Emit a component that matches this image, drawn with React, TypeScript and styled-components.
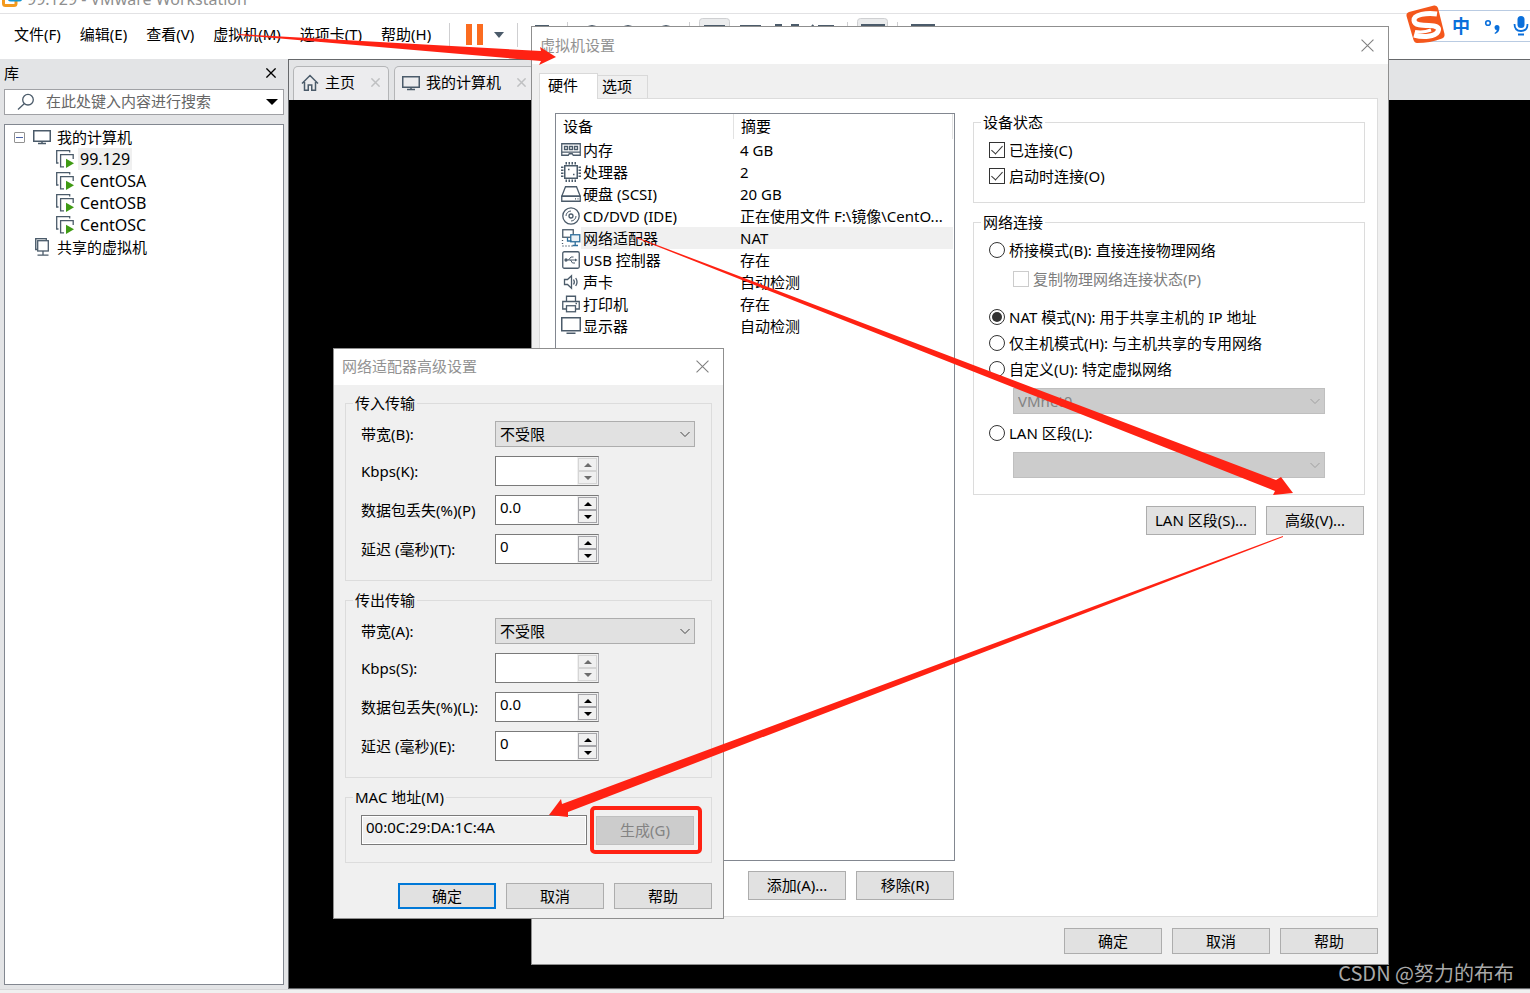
import React from "react";
import styled, { createGlobalStyle, css } from "styled-components";

const slate = "#4b5b6a";
const red = "#ff2213";

const GlobalStyle = createGlobalStyle`
  *, *::before, *::after { box-sizing: border-box; }
  body { margin: 0; background: #f0f0f0; }
  body, button, input, select {
    font-family: "Noto Sans", "Noto Sans CJK SC", sans-serif;
    font-size: 15px;
    line-height: 19px;
    color: #000;
  }
  button { padding: 0; cursor: default; }
  svg { display: block; flex: none; }
`;

/* ---------- main window ---------- */

const Desktop = styled.div`
  position: relative;
  display: flex;
  flex-direction: column;
  min-height: 100vh;
  overflow: hidden;
  background: #f0f0f0;
`;

const TitleBar = styled.header`
  display: flex;
  align-items: flex-end;
  gap: 4px;
  height: 14px;
  padding: 0 0 6px 2px;
  overflow: hidden;
  background: #fff;
  border-bottom: 1px solid #e2e2e4;
`;

const WindowTitle = styled.span`
  font-size: 16px;
  line-height: 16px;
  color: #8f8f8f;
  white-space: nowrap;
`;

const MenuBar = styled.nav`
  display: flex;
  align-items: center;
  height: 45px;
  padding: 0 0 4px 5px;
  background: #fff;
`;

const MenuGroup = styled.div`
  display: flex;
  padding: 0 8px 1px 0;
`;

const MenuButton = styled.button`
  padding: 0 10px 0 9px;
  border: 0;
  background: none;
  white-space: nowrap;
`;

const ToolDivider = styled.span`
  width: 1px;
  height: 24px;
  background: #cfcfd1;
`;

const ToolButton = styled.button`
  display: flex;
  align-items: center;
  border: 0;
  background: none;
`;

const PauseButton = styled(ToolButton)`
  gap: 11px;
  margin: 0 13px 0 16px;
`;

const ToolStrip = styled.div`
  align-self: flex-start;
  padding-top: 3px;
`;

const Workspace = styled.div`
  display: flex;
  flex: 1;
  background: #e3e4e6;
`;

const Sidebar = styled.aside`
  display: flex;
  flex-direction: column;
  flex: none;
  width: 288px;
  padding: 0 4px 4px;
`;

const SidebarHeader = styled.div`
  display: flex;
  align-items: center;
  justify-content: space-between;
  height: 30px;
  padding: 0 8px 2px 0;
`;

const SearchBox = styled.div`
  display: flex;
  align-items: center;
  height: 26px;
  padding: 0 5px 1px 12px;
  background: #fff;
  border: 1px solid #a0a1a5;
`;

const SearchInput = styled.input`
  flex: 1;
  min-width: 0;
  padding: 0 0 0 11px;
  border: 0;
  outline: 0;
  background: none;
  &::placeholder { color: #666; opacity: 1; }
`;

const TreePanel = styled.div`
  flex: 1;
  margin-top: 9px;
  padding-top: 1px;
  background: #fff;
  border: 1px solid #828790;
`;

const TreeList = styled.ul`
  margin: 0;
  padding: 0;
  list-style: none;
`;

const TreeRow = styled.div<{ $indent: number }>`
  display: flex;
  align-items: center;
  gap: 4px;
  height: 22px;
  padding-left: ${(p) => p.$indent}px;
`;

const TreeLabel = styled.span<{ $selected?: boolean; $latin?: boolean }>`
  padding: 0 2px;
  font-size: ${(p) => (p.$latin ? 16 : 15)}px;
  line-height: 22px;
  background: ${(p) => (p.$selected ? "#f0f0f0" : "none")};
`;

const Expander = styled.button`
  display: flex;
  width: 11px;
  height: 11px;
  margin-right: 4px;
  background: #fff;
  border: 1px solid #919191;
  border-radius: 1px;
  align-items: center;
  justify-content: center;
  &::after { content: ""; width: 7px; height: 1px; background: #4b63a7; }
`;

const Stage = styled.main`
  display: flex;
  flex-direction: column;
  flex: 1;
  min-width: 0;
  background: #000;
  border: 1px solid #66686b;
  border-right: 0;
`;

const TabStrip = styled.div`
  display: flex;
  gap: 5px;
  height: 40px;
  padding: 6px 4px 0;
  background: #e3e4e6;
`;

const PageTab = styled.div`
  display: flex;
  align-items: center;
  padding: 0 8px 2px 7px;
  background: #ececee;
  border: 1px solid #b4b5b7;
  border-bottom: 0;
  border-radius: 5px 5px 0 0;
  white-space: nowrap;
`;

const TabName = styled.span`
  padding: 0 16px 0 6px;
`;

const StatusBar = styled.footer`
  height: 4px;
  background: #f0f0f0;
  border-top: 1px solid #d6d6d8;
`;

/* ---------- dialogs ---------- */

const Dialog = styled.section<{ $left: number; $top: number; $width: number }>`
  position: absolute;
  left: ${(p) => p.$left}px;
  top: ${(p) => p.$top}px;
  width: ${(p) => p.$width}px;
  background: #f0f0f0;
  border: 1px solid #8f8f8f;
`;

const DialogTitle = styled.header<{ $compact?: boolean }>`
  display: flex;
  align-items: center;
  justify-content: space-between;
  height: ${(p) => (p.$compact ? 36 : 37)}px;
  padding: 0 14px 1px 8px;
  background: #fff;
  color: #929292;
`;

const IconButton = styled.button`
  display: flex;
  border: 0;
  background: none;
`;

const SettingsBody = styled.div`
  padding: 9px 10px 10px 7px;
`;

const TabRow = styled.div`
  display: flex;
  align-items: flex-end;
`;

const DialogTab = styled.button<{ $active?: boolean }>`
  position: relative;
  height: 23px;
  padding: 0 15px 1px 4px;
  text-align: left;
  background: #f0f0f0;
  border: 1px solid #d9d9d9;
  border-width: 1px 1px 0 0;
  ${(p) =>
    p.$active &&
    css`
      z-index: 1;
      height: 26px;
      margin-bottom: -1px;
      padding: 0 19px 3px 8px;
      background: #fff;
      border-left-width: 1px;
    `}
`;

const Panel = styled.div`
  display: flex;
  align-items: flex-start;
  gap: 18px;
  padding: 14px 12px 16px 15px;
  background: #fff;
  border: 1px solid #dcdcdc;
`;

const DeviceColumn = styled.div`
  flex: 0 0 400px;
`;

const DeviceBox = styled.div`
  min-height: 748px;
  border: 1px solid #828790;
`;

const DeviceTable = styled.table`
  width: 100%;
  table-layout: fixed;
  border-collapse: collapse;
  border-spacing: 0;
  td, th { padding: 0; height: 22px; font-weight: 400; text-align: left; white-space: nowrap; }
`;

const HeadCell = styled.th<{ $first?: boolean }>`
  width: ${(p) => (p.$first ? "178px" : "auto")};
  div {
    height: 25px;
    margin-right: ${(p) => (p.$first ? 0 : 1)}px;
    padding: 3px 7px;
    border-right: 1px solid #e2e2e2;
  }
`;

const NameCell = styled.div`
  display: flex;
  align-items: center;
  height: 22px;
  padding-left: 5px;
`;

const CellText = styled.span<{ $selected: boolean; $summary?: boolean }>`
  display: block;
  flex: 1;
  height: 22px;
  margin-right: ${(p) => (p.$summary ? 1 : 0)}px;
  padding-left: ${(p) => (p.$summary ? 6 : 2)}px;
  line-height: 22px;
  background: ${(p) => (p.$selected ? "#f0f0f0" : "none")};
`;

const OptionsColumn = styled.div`
  flex: 1;
  min-width: 0;
`;

const Group = styled.fieldset`
  min-width: 0;
  margin: 0 0 10px;
  padding: 0 7px;
  border: 1px solid #dcdcdc;
`;

const Legend = styled.legend`
  padding: 0 2px;
  line-height: 19px;
`;

const OptionList = styled.div`
  display: flex;
  flex-direction: column;
  padding: 5px 8px 13px;
`;

const Option = styled.label<{ $sub?: boolean; $disabled?: boolean }>`
  display: flex;
  align-items: center;
  gap: 4px;
  height: 26px;
  margin: ${(p) => (p.$sub ? "3px 0 12px 24px" : "0")};
  color: ${(p) => (p.$disabled ? "#7d7d7d" : "#000")};
  white-space: nowrap;
`;

const Tick = styled.input`
  appearance: none;
  display: flex;
  flex: none;
  align-items: center;
  justify-content: center;
  width: 16px;
  height: 16px;
  margin: 0;
  background: #fff;
  border: 1px solid #333;
  &:disabled { border-color: #ccc; }
  &[type="radio"] { border-radius: 50%; }
  &[type="radio"]:checked::after {
    content: "";
    width: 10px;
    height: 10px;
    border-radius: 50%;
    background: #333;
  }
  &[type="checkbox"]:checked::after {
    content: "";
    width: 6px;
    height: 11px;
    margin-top: -4px;
    border: solid #333;
    border-width: 0 1px 1px 0;
    transform: rotate(42deg);
  }
`;

const SelectWrap = styled.div<{ $inset?: boolean }>`
  position: relative;
  height: 26px;
  margin: ${(p) => (p.$inset ? "6px 24px 6px 24px" : "0")};
  &:last-child { margin-bottom: ${(p) => (p.$inset ? 3 : 0)}px; }
  svg { position: absolute; right: 4px; top: 10px; }
`;

const SelectBox = styled.select`
  appearance: none;
  display: block;
  width: 100%;
  height: 26px;
  padding: 0 24px 0 4px;
  background: #e1e1e1;
  border: 1px solid #adadad;
  border-radius: 0;
  &:disabled { background: #ccc; border-color: #bfbfbf; color: #838383; opacity: 1; }
`;

const ButtonRow = styled.div<{ $gapTop: number; $inset?: boolean }>`
  display: flex;
  justify-content: flex-end;
  gap: 10px;
  margin-top: ${(p) => p.$gapTop}px;
  padding-right: ${(p) => (p.$inset ? 1 : 0)}px;
`;

const PushButton = styled.button<{ $wide?: boolean; $tall?: boolean; $primary?: boolean }>`
  width: ${(p) => (p.$wide ? 110 : 98)}px;
  height: ${(p) => (p.$tall ? 29 : 26)}px;
  background: #e1e1e1;
  border: ${(p) => (p.$primary ? "2px solid #0078d7" : "1px solid #adadad")};
  white-space: nowrap;
  &:disabled { background: #ccc; border-color: #bfbfbf; color: #838383; }
`;

const AdvancedBody = styled.div`
  padding: 9px 11px 9px;
`;

const FieldGrid = styled.div`
  display: grid;
  grid-template-columns: 134px 200px;
  align-items: center;
  row-gap: 9px;
  padding: 8px 8px 16px;
`;

const FieldLabel = styled.label`
  white-space: nowrap;
`;

const Spinner = styled.div`
  display: flex;
  width: 104px;
  height: 30px;
  border: 1px solid #7a7a7a;
  border-right-color: #adadb2;
  background: #fff;
`;

const SpinnerInput = styled.input`
  flex: 1;
  min-width: 0;
  padding: 0 4px 6px;
  border: 0;
  outline: 0;
  background: #fff;
`;

const SpinnerButtons = styled.div`
  display: flex;
  flex-direction: column;
  width: 21px;
  padding: 1px;
  background: #f0f0f0;
`;

const SpinButton = styled.button`
  display: flex;
  flex: 1;
  align-items: center;
  justify-content: center;
  color: #000;
  background: #f0f0f0;
  border: 1px solid #a5a5a9;
  &:disabled { color: #6d6d6d; border-color: #d5d5d5; }
`;

const MacRow = styled.div`
  display: flex;
  align-items: center;
  gap: 9px;
  padding: 8px 8px 17px;
`;

const MacInput = styled.input`
  width: 226px;
  height: 30px;
  padding: 0 4px 6px;
  background: #f0f0f0;
  border: 1px solid #7a7a7a;
  outline: 0;
  box-shadow: inset 0 0 0 1px #fff;
`;

/* ---------- overlays ---------- */

const Annotations = styled.svg`
  position: absolute;
  left: 0;
  top: 0;
  pointer-events: none;
`;

const ImeBar = styled.div`
  position: absolute;
  right: 0;
  top: 10px;
  display: flex;
  align-items: center;
  width: 104px;
  height: 32px;
  padding-left: 26px;
  background: #fff;
  border: solid #b9cbe2;
  border-width: 1px 0;
`;

const ImeLogo = styled.div`
  position: absolute;
  left: -21px;
  top: -7px;
`;

const ImeMode = styled.span`
  width: 20px;
  font-size: 18px;
  line-height: 24px;
  font-weight: 700;
  color: #0a6fdb;
`;

const Watermark = styled.div`
  position: absolute;
  right: 16px;
  bottom: 7px;
  font-family: "Noto Sans CJK SC", sans-serif;
  font-size: 20px;
  line-height: 26px;
  color: #a9a9a9;
`;

/* ---------- icons ---------- */

const Cross = ({ size, color, width = 1 }: { size: number; color: string; width?: number }) => (
  <svg width={size} height={size} viewBox="0 0 12 12" stroke={color} strokeWidth={width} fill="none">
    <path d="M0.5 0.5l11 11M11.5 0.5l-11 11" />
  </svg>
);

const Chevron = ({ off }: { off?: boolean }) => (
  <svg width="12" height="7" viewBox="0 0 12 7" fill="none" stroke={off ? "#a0a0a0" : "#444"}>
    <path d="M1.5 1l4.5 4.5L10.500 1" />
  </svg>
);

const Triangle = ({ up }: { up?: boolean }) => (
  <svg width="8" height="4" viewBox="0 0 8 4" fill="currentColor">
    <path d={up ? "M0 4L4 0l4 4z" : "M0 0l4 4 4-4z"} />
  </svg>
);

const Caret = ({ w, h, color }: { w: number; h: number; color: string }) => (
  <svg width={w} height={h} viewBox="0 0 12 6" preserveAspectRatio="none" fill={color}>
    <path d="M0 0h12L6 6z" />
  </svg>
);

const MonitorIcon = () => (
  <svg width="18" height="16" viewBox="0 0 18 16" fill="none" stroke={slate} strokeWidth="1.500">
    <rect x="0.750" y="1.750" width="16.500" height="10.500" />
    <path d="M5 14.500h8M9 12v2.500" />
  </svg>
);

const HomeIcon = () => (
  <svg width="18" height="18" viewBox="0 0 18 18" fill="none" stroke={slate} strokeWidth="1.500">
    <path d="M1 9.500L9 1.500l8 8M3.500 8v8.250h3.750V11h3.500v5.250h3.750V8" />
  </svg>
);

const VmIcon = () => (
  <svg width="18" height="18" viewBox="0 0 18 18" fill="none" stroke={slate} strokeWidth="1.300">
    <path d="M2.500 13H0.700V0.700h13V2.500" />
    <path d="M8 16.800H4.600V4.600h12.600V9" />
    <path d="M10 8.700l8 4.600-8 4.600z" fill="#3f9a14" stroke="none" />
  </svg>
);

const SharedIcon = () => (
  <svg width="18" height="18" viewBox="0 0 18 18" fill="none" stroke={slate} strokeWidth="1.300">
    <path d="M4.500 11.500H2.700V0.700h10.600V2.500" fill="#dfe3e6" />
    <rect x="4.700" y="2.700" width="10.600" height="10.300" fill="#fff" />
    <path d="M10 13v4M4.500 17.200h11" />
  </svg>
);

const SearchIcon = () => (
  <svg width="18" height="18" viewBox="0 0 18 18" fill="none" stroke={slate} strokeWidth="1.300">
    <circle cx="11" cy="6.700" r="5.300" />
    <path d="M7.200 10.700L1 16.500" />
  </svg>
);

const AppLogo = () => (
  <svg width="21" height="20" viewBox="0 0 21 20" fill="none">
    <rect x="1.500" y="5" width="12.500" height="13.500" rx="2" stroke="#f39a1e" strokeWidth="3" />
    <rect x="7" y="0" width="12" height="13" rx="2" fill="#fff" stroke="#1496cf" strokeWidth="3" />
  </svg>
);

const deviceArt: Record<string, React.ReactNode> = {
  memory: (
    <>
      <path d="M0.750 3.750h18.500v11.500h-7l-1-1.500h-3l-1 1.500h-6.500z" />
      <path d="M3.500 6.500h3v3h-3zM8.500 6.500h3v3h-3zM13.500 6.500h3v3h-3zM1 12.200h18" />
    </>
  ),
  cpu: (
    <>
      <rect x="3.750" y="3.750" width="12.500" height="12.500" strokeWidth="1.500" />
      <path strokeDasharray="1.500 1.500" strokeWidth="2.500" d="M4.500 1.200h12M4.500 18.800h12M1.200 4.500v12M18.800 4.500v12" />
      <path d="M7 7.500h1.500M12 12.500h1.500" strokeWidth="1.500" />
    </>
  ),
  disk: (
    <>
      <path d="M4.500 2.750h11l3.750 9.500H0.750z" />
      <path d="M0.750 12.250h18.500v5H0.750z" />
      <path d="M14 14.800h1M16.500 14.800h1" />
    </>
  ),
  cd: (
    <>
      <circle cx="10" cy="10" r="8.200" />
      <circle cx="10" cy="10" r="2" />
      <path d="M10 5a5 5 0 0 0-5 5M10 15a5 5 0 0 0 5-5" strokeWidth="1" />
    </>
  ),
  network: (
    <>
      <rect x="1.750" y="1.750" width="10.500" height="7.500" />
      <rect x="9.750" y="6.750" width="9" height="7" fill="#eaf1f6" stroke="#2e6f9c" />
      <path d="M6.500 9.500V13h4M14.200 14v3.500M11.500 17.500h5.500" stroke="#2e6f9c" />
      <path d="M1.500 12v6h10" strokeDasharray="1 2" />
    </>
  ),
  usb: (
    <>
      <rect x="1.750" y="1.750" width="16.500" height="16.500" rx="1.500" />
      <path d="M5 10h9.500M7.500 10l2.500-3h2.500M9.500 10l2 3h2.500" strokeWidth="1" />
      <circle cx="5" cy="10" r="1" fill={slate} />
      <path d="M14 8.500l2.500 1.500L14 11.500z" fill={slate} stroke="none" />
    </>
  ),
  sound: (
    <>
      <path d="M3.500 7.500h3l4-3.750v12.500l-4-3.750h-3z" />
      <path d="M12.500 7.500q1.700 2.500 0 5M14.700 6q2.700 4 0 8" />
    </>
  ),
  printer: (
    <>
      <path d="M5.500 7.500V2.250h9V7.500M5.500 15H1.750V7.500h16.500V15H14.500" />
      <rect x="5.500" y="11.750" width="9" height="6" />
      <path d="M14.500 9.500h1.500" />
    </>
  ),
  display: (
    <>
      <rect x="0.750" y="1.750" width="18.500" height="13" strokeWidth="1.500" />
      <path d="M5.500 17.250h9" strokeWidth="1.500" />
    </>
  ),
};

const DeviceIcon = ({ kind }: { kind: string }) => (
  <svg width="20" height="20" viewBox="0 0 20 20" fill="none" stroke={slate} strokeWidth="1.300">
    {deviceArt[kind]}
  </svg>
);

const ToolIcons = () => (
  <svg width="420" height="36" viewBox="0 0 420 36" fill="none" stroke={slate} strokeWidth="2">
    <path d="M49.500 5v24M171.500 5v24M329.500 5v24M379.500 5v24" stroke="#cfcfd1" strokeWidth="1" />
    <rect x="181.500" y="1.500" width="30" height="32" rx="3" fill="#ebeced" stroke="#cfd0d2" strokeWidth="1" />
    <rect x="339.500" y="1.500" width="30" height="32" rx="3" fill="#ebeced" stroke="#cfd0d2" strokeWidth="1" />
    <path d="M18 9h12v18H18zM187 9h19v16h-19zM223 9h19v16h-19zM344 8h22v17h-22zM394 8h22v17h-22z" />
    <path d="M258 15V8h6M273 8h7v7M294 8l5 6M300 9h15v16h-15" />
    <circle cx="74" cy="17" r="8" />
    <circle cx="110" cy="17" r="8" />
    <circle cx="148" cy="17" r="8" />
  </svg>
);

/* ---------- data ---------- */

const menus = ["文件(F)", "编辑(E)", "查看(V)", "虚拟机(M)", "选项卡(T)", "帮助(H)"];
const machines = ["99.129", "CentOSA", "CentOSB", "CentOSC"];

const devices = [
  { kind: "memory", name: "内存", summary: "4 GB" },
  { kind: "cpu", name: "处理器", summary: "2" },
  { kind: "disk", name: "硬盘 (SCSI)", summary: "20 GB" },
  { kind: "cd", name: "CD/DVD (IDE)", summary: "正在使用文件 F:\\镜像\\CentO..." },
  { kind: "network", name: "网络适配器", summary: "NAT" },
  { kind: "usb", name: "USB 控制器", summary: "存在" },
  { kind: "sound", name: "声卡", summary: "自动检测" },
  { kind: "printer", name: "打印机", summary: "存在" },
  { kind: "display", name: "显示器", summary: "自动检测" },
];

/* ---------- composed parts ---------- */

const DropDown = ({ id, label, value, disabled, inset }: {
  id?: string; label?: string; value: string; disabled?: boolean; inset?: boolean;
}) => (
  <SelectWrap $inset={inset}>
    <SelectBox id={id} aria-label={label} disabled={disabled} defaultValue={value}>
      <option value={value}>{value}</option>
    </SelectBox>
    <Chevron off={disabled} />
  </SelectWrap>
);

const NumberField = ({ id, label, value, disabled }: {
  id: string; label: string; value: string; disabled?: boolean;
}) => (
  <>
    <FieldLabel htmlFor={id}>{label}</FieldLabel>
    <Spinner>
      <SpinnerInput id={id} defaultValue={value} disabled={disabled} />
      <SpinnerButtons>
        <SpinButton aria-label="增加" disabled={disabled}><Triangle up /></SpinButton>
        <SpinButton aria-label="减少" disabled={disabled}><Triangle /></SpinButton>
      </SpinnerButtons>
    </Spinner>
  </>
);

const TransferGroup = ({ prefix, title, labels }: { prefix: string; title: string; labels: string[] }) => (
  <Group>
    <Legend>{title}</Legend>
    <FieldGrid>
      <FieldLabel htmlFor={`${prefix}-bandwidth`}>{labels[0]}</FieldLabel>
      <DropDown id={`${prefix}-bandwidth`} value="不受限" />
      <NumberField id={`${prefix}-kbps`} label={labels[1]} value="" disabled />
      <NumberField id={`${prefix}-loss`} label={labels[2]} value="0.0" />
      <NumberField id={`${prefix}-delay`} label={labels[3]} value="0" />
    </FieldGrid>
  </Group>
);

const LibrarySidebar = () => (
  <Sidebar>
    <SidebarHeader>
      <span>库</span>
      <IconButton aria-label="关闭库"><Cross size={10} color="#000" width={1.6} /></IconButton>
    </SidebarHeader>
    <SearchBox>
      <SearchIcon />
      <SearchInput aria-label="搜索" placeholder="在此处键入内容进行搜索" />
      <Caret w={12} h={6} color="#000" />
    </SearchBox>
    <TreePanel>
      <TreeList>
        <li>
          <TreeRow $indent={9}>
            <Expander aria-label="折叠" />
            <MonitorIcon />
            <TreeLabel>我的计算机</TreeLabel>
          </TreeRow>
          <TreeList>
            {machines.map((name, i) => (
              <li key={name}>
                <TreeRow $indent={51}>
                  <VmIcon />
                  <TreeLabel $latin $selected={i === 0}>{name}</TreeLabel>
                </TreeRow>
              </li>
            ))}
          </TreeList>
        </li>
        <li>
          <TreeRow $indent={28}>
            <SharedIcon />
            <TreeLabel>共享的虚拟机</TreeLabel>
          </TreeRow>
        </li>
      </TreeList>
    </TreePanel>
  </Sidebar>
);

const SettingsDialog = () => (
  <Dialog $left={531} $top={26} $width={858} role="dialog" aria-label="虚拟机设置">
    <DialogTitle>
      <span>虚拟机设置</span>
      <IconButton aria-label="关闭"><Cross size={13} color="#808080" /></IconButton>
    </DialogTitle>
    <SettingsBody>
      <TabRow role="tablist">
        <DialogTab role="tab" $active>硬件</DialogTab>
        <DialogTab role="tab">选项</DialogTab>
      </TabRow>
      <Panel>
        <DeviceColumn>
          <DeviceBox>
            <DeviceTable>
              <thead>
                <tr>
                  <HeadCell $first><div>设备</div></HeadCell>
                  <HeadCell><div>摘要</div></HeadCell>
                </tr>
              </thead>
              <tbody>
                {devices.map((d) => (
                  <tr key={d.kind}>
                    <td>
                      <NameCell>
                        <DeviceIcon kind={d.kind} />
                        <CellText $selected={d.kind === "network"}>{d.name}</CellText>
                      </NameCell>
                    </td>
                    <td><CellText $summary $selected={d.kind === "network"}>{d.summary}</CellText></td>
                  </tr>
                ))}
              </tbody>
            </DeviceTable>
          </DeviceBox>
          <ButtonRow $gapTop={10} $inset>
            <PushButton $tall>添加(A)...</PushButton>
            <PushButton $tall>移除(R)</PushButton>
          </ButtonRow>
        </DeviceColumn>
        <OptionsColumn>
          <Group>
            <Legend>设备状态</Legend>
            <OptionList>
              <Option><Tick type="checkbox" defaultChecked />已连接(C)</Option>
              <Option><Tick type="checkbox" defaultChecked />启动时连接(O)</Option>
            </OptionList>
          </Group>
          <Group>
            <Legend>网络连接</Legend>
            <OptionList>
              <Option><Tick type="radio" name="net" />桥接模式(B): 直接连接物理网络</Option>
              <Option $sub $disabled><Tick type="checkbox" disabled />复制物理网络连接状态(P)</Option>
              <Option><Tick type="radio" name="net" defaultChecked />NAT 模式(N): 用于共享主机的 IP 地址</Option>
              <Option><Tick type="radio" name="net" />仅主机模式(H): 与主机共享的专用网络</Option>
              <Option><Tick type="radio" name="net" />自定义(U): 特定虚拟网络</Option>
              <DropDown inset disabled label="特定虚拟网络" value="VMnet0" />
              <Option><Tick type="radio" name="net" />LAN 区段(L):</Option>
              <DropDown inset disabled label="LAN 区段" value="" />
            </OptionList>
          </Group>
          <ButtonRow $gapTop={11} $inset>
            <PushButton $tall $wide>LAN 区段(S)...</PushButton>
            <PushButton $tall>高级(V)...</PushButton>
          </ButtonRow>
        </OptionsColumn>
      </Panel>
      <ButtonRow $gapTop={11}>
        <PushButton>确定</PushButton>
        <PushButton>取消</PushButton>
        <PushButton>帮助</PushButton>
      </ButtonRow>
    </SettingsBody>
  </Dialog>
);

const AdvancedDialog = () => (
  <Dialog $left={333} $top={348} $width={391} role="dialog" aria-label="网络适配器高级设置">
    <DialogTitle $compact>
      <span>网络适配器高级设置</span>
      <IconButton aria-label="关闭"><Cross size={13} color="#808080" /></IconButton>
    </DialogTitle>
    <AdvancedBody>
      <TransferGroup
        prefix="in"
        title="传入传输"
        labels={["带宽(B):", "Kbps(K):", "数据包丢失(%)(P)", "延迟 (毫秒)(T):"]}
      />
      <TransferGroup
        prefix="out"
        title="传出传输"
        labels={["带宽(A):", "Kbps(S):", "数据包丢失(%)(L):", "延迟 (毫秒)(E):"]}
      />
      <Group>
        <Legend>MAC 地址(M)</Legend>
        <MacRow>
          <MacInput aria-label="MAC 地址" readOnly value="00:0C:29:DA:1C:4A" />
          <PushButton $tall disabled>生成(G)</PushButton>
        </MacRow>
      </Group>
      <ButtonRow $gapTop={20}>
        <PushButton $primary>确定</PushButton>
        <PushButton>取消</PushButton>
        <PushButton>帮助</PushButton>
      </ButtonRow>
    </AdvancedBody>
  </Dialog>
);

const InputMethodBar = () => (
  <ImeBar>
    <ImeLogo>
      <svg width="42" height="40" viewBox="0 0 42 40">
        <path d="M4 8L29 1.500Q32 1 33 4l6.500 26Q40 33 37 34.500 25 39 12 39 9.500 39 8.500 36L1.500 12Q1 9 4 8z" fill="#f4571c" />
        <path
          d="M32 10C22 8.500 8.500 10.500 9 16.500 9.500 21.500 17 21.500 24 21.500 31 21.500 35 23.500 33 27.500 30 33 18 33.500 9 31"
          fill="none" stroke="#fff" strokeWidth="5"
        />
        <path d="M10 27.500q8 1.500 16-1.500" fill="none" stroke="#fff" strokeWidth="3" />
      </svg>
    </ImeLogo>
    <ImeMode>中</ImeMode>
    <svg width="58" height="28" viewBox="0 0 58 28">
      <circle cx="16" cy="11" r="2.300" fill="none" stroke="#0a6fdb" strokeWidth="1.600" />
      <path d="M22.500 15.500a2.500 2.500 0 0 1 5 0q0 5-4.500 6.500l-.5-1q2-1 2.300-3-2.300 0-2.300-2.500z" fill="#0a6fdb" />
      <rect x="45.500" y="4" width="7" height="12" rx="3.500" fill="#0a6fdb" />
      <path d="M42.500 12q0 7 6.500 7t6.500-7M46 22.500h6" fill="none" stroke="#0a6fdb" strokeWidth="1.800" />
    </svg>
  </ImeBar>
);

export default function App() {
  return (
    <Desktop>
      <GlobalStyle />
      <TitleBar>
        <AppLogo />
        <WindowTitle>99.129 - VMware Workstation</WindowTitle>
      </TitleBar>
      <MenuBar>
        <MenuGroup>
          {menus.map((m) => <MenuButton key={m}>{m}</MenuButton>)}
        </MenuGroup>
        <ToolDivider />
        <PauseButton aria-label="挂起">
          <svg width="17" height="21" viewBox="0 0 17 21" fill="#fb6c20">
            <path d="M0 0h6v21H0zM11 0h6v21h-6z" />
          </svg>
          <Caret w={10} h={6} color={slate} />
        </PauseButton>
        <ToolDivider />
        <ToolStrip><ToolIcons /></ToolStrip>
      </MenuBar>
      <Workspace>
        <LibrarySidebar />
        <Stage>
          <TabStrip>
            <PageTab>
              <HomeIcon />
              <TabName>主页</TabName>
              <IconButton aria-label="关闭标签"><Cross size={9} color="#bfc0c2" width={2} /></IconButton>
            </PageTab>
            <PageTab>
              <MonitorIcon />
              <TabName>我的计算机</TabName>
              <IconButton aria-label="关闭标签"><Cross size={9} color="#bfc0c2" width={2} /></IconButton>
            </PageTab>
          </TabStrip>
        </Stage>
      </Workspace>
      <StatusBar />
      <SettingsDialog />
      <AdvancedDialog />
      <InputMethodBar />
      <Watermark>CSDN @努力的布布</Watermark>
      <Annotations width="1530" height="993" viewBox="0 0 1530 993" fill={red}>
        <path d="M238 34L541 51 540 47 556 57 539 65 541 61 238 35z" />
        <path d="M636 237L1276 480 1281 477 1293 493 1273 495 1275 491 636 238z" />
        <path d="M1283 537L568 812 568 817 549 815 561 799 562 804 1283 536z" />
        <rect x="592" y="808" width="108" height="44" rx="3" fill="none" stroke={red} strokeWidth="4" />
      </Annotations>
    </Desktop>
  );
}
